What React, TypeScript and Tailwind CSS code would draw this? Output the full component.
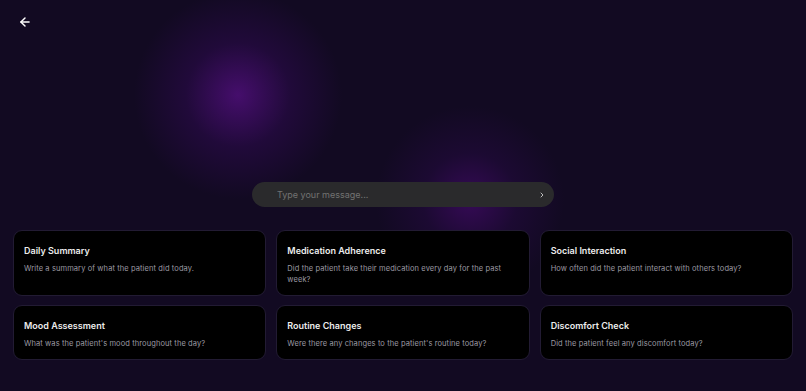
import React from "react";
import { ArrowLeft, ChevronRight } from "lucide-react";

interface IPrompt {
  title: string;
  text: string;
}

const prompts: IPrompt[] = [
  { title: "Daily Summary", text: "Write a summary of what the patient did today." },
  { title: "Medication Adherence", text: "Did the patient take their medication every day for the past week?" },
  { title: "Social Interaction", text: "How often did the patient interact with others today?" },
  { title: "Mood Assessment", text: "What was the patient's mood throughout the day?" },
  { title: "Routine Changes", text: "Were there any changes to the patient's routine today?" },
  { title: "Discomfort Check", text: "Did the patient feel any discomfort today?" },
];

const PromptCard = ({ title, text }: IPrompt) => (
  <button
    type="button"
    className="text-left bg-black border border-[#221b33] rounded-[9px] pl-[10px] pr-4 pt-[14px] pb-[10px] flex flex-col justify-start gap-[7px]"
  >
    <h3 className="text-[9px] leading-[11px] font-semibold text-[#ececec]">{title}</h3>
    <p className="text-[7.5px] leading-[11px] text-[#9c9aa3] tracking-[0.1px]">{text}</p>
  </button>
);

const App = () => {
  const [message, setMessage] = React.useState("");
  return (
    <div
      className="relative min-h-screen overflow-hidden bg-[#120a22] text-white"
      style={{ fontFamily: "Inter, 'Noto Sans', sans-serif" }}
    >
      {/* glow blobs */}
      <div className="pointer-events-none absolute left-[133px] top-[-10px] w-[210px] h-[210px] rounded-full bg-[radial-gradient(circle,rgba(72,14,112,0.95)_0%,rgba(45,10,78,0.55)_35%,rgba(18,10,34,0)_70%)]" />
      <div className="pointer-events-none absolute left-[375px] top-[105px] w-[190px] h-[190px] rounded-full bg-[radial-gradient(circle,rgba(60,10,95,0.85)_0%,rgba(40,10,70,0.45)_35%,rgba(18,10,34,0)_70%)]" />

      <div className="relative flex flex-col">
        <div className="pt-[15px] pl-[18px] flex">
          <button type="button" className="text-white flex items-center">
            <ArrowLeft size={14} strokeWidth={2.5} />
          </button>
        </div>

        <div className="mt-[153px] flex justify-center">
          <div className="w-[302px] h-[25px] rounded-full bg-[#2a2a2c] flex items-center pl-[25px] pr-[8px]">
            <input
              value={message}
              onChange={(e: React.ChangeEvent<HTMLInputElement>) => setMessage(e.target.value)}
              placeholder="Type your message..."
              className="flex-1 bg-transparent outline-none text-[9px] text-white placeholder:text-[#727272]"
            />
            <ChevronRight size={8} strokeWidth={3} className="text-[#bdbdbd]" />
          </div>
        </div>

        <div className="mt-[23px] px-[13px] grid grid-cols-3 gap-x-[10px] gap-y-[9px]">
          {prompts.map((p) => (
            <PromptCard key={p.title} title={p.title} text={p.text} />
          ))}
        </div>
      </div>
    </div>
  );
};

export default App;
